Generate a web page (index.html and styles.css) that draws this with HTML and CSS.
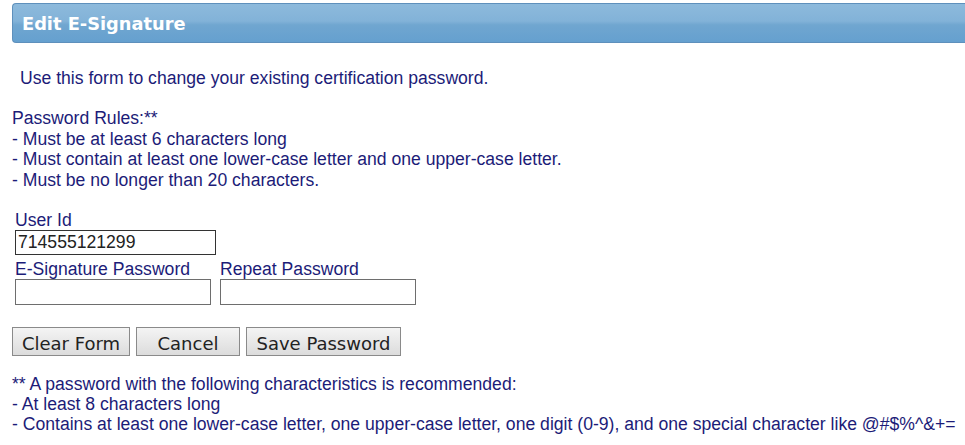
FILE: index.html
```html
<!DOCTYPE html>
<html>
<head>
<meta charset="utf-8">
<link rel="stylesheet" href="styles.css">
</head>
<body>
<div class="header"><span class="title">Edit E-Signature</span></div>
<p class="intro">Use this form to change your existing certification password.</p>
<div class="rules">
  <div>Password Rules:**</div>
  <div>- Must be at least 6 characters long</div>
  <div>- Must contain at least one lower-case letter and one upper-case letter.</div>
  <div>- Must be no longer than 20 characters.</div>
</div>
<form class="form">
  <div class="field">
    <label class="label">User Id</label>
    <input class="input input-user" type="text" value="714555121299">
  </div>
  <div class="row">
    <div class="field">
      <label class="label">E-Signature Password</label>
      <input class="input input-pw" type="password">
    </div>
    <div class="field">
      <label class="label">Repeat Password</label>
      <input class="input input-pw" type="password">
    </div>
  </div>
  <div class="buttons">
    <button type="button" class="btn btn-clear">Clear Form</button>
    <button type="button" class="btn btn-cancel">Cancel</button>
    <button type="button" class="btn btn-save">Save Password</button>
  </div>
</form>
<div class="notes">
  <div>** A password with the following characteristics is recommended:</div>
  <div>- At least 8 characters long</div>
  <div>- Contains at least one lower-case letter, one upper-case letter, one digit (0-9), and one special character like @#$%^&amp;+=</div>
</div>
</body>
</html>
```
FILE: styles.css
```css
html, body {
  margin: 0;
  padding: 0;
  background: #ffffff;
}
body {
  font-family: "Liberation Sans", Arial, sans-serif;
  font-size: 17.6px;
  color: #1c1c78;
  overflow: hidden;
}
.header {
  margin: 3px 0 0 12px;
  height: 38px;
  border: 1px solid #5e90bc;
  border-right: none;
  border-radius: 4px 0 0 4px;
  background: linear-gradient(to bottom, #8dbadc 0%, #82b2d8 45%, #70a6d0 55%, #65a0cf 100%);
  display: flex;
  align-items: center;
  padding-left: 9px;
}
.title {
  font-family: "DejaVu Sans", Verdana, sans-serif;
  font-weight: bold;
  font-size: 17.8px;
  color: #ffffff;
}
.intro {
  margin: 25px 0 0 20px;
  line-height: 20px;
}
.rules {
  margin: 20px 0 0 12px;
  line-height: 20.5px;
}
.form {
  margin: 20px 0 0 15px;
}
.field {
  display: flex;
  flex-direction: column;
  align-items: flex-start;
}
.label {
  line-height: 20px;
}
.row {
  display: flex;
  gap: 9px;
  margin-top: 4px;
}
.input {
  box-sizing: border-box;
  margin: 0;
  height: 26px;
  border: 1px solid #6e6e6e;
  font-family: "Liberation Sans", Arial, sans-serif;
  font-size: 17.6px;
  color: #222222;
  padding: 0 2px;
  background: #fff;
}
.input-user {
  width: 201px;
  height: 25px;
  border-color: #333;
}
.input-pw {
  width: 196px;
}
.buttons {
  display: flex;
  gap: 6px;
  margin: 22px 0 0 -3px;
}
.btn {
  box-sizing: border-box;
  height: 29px;
  border: 1px solid #8a8a8a;
  background: linear-gradient(to bottom, #f4f4f4 0%, #e8e8e8 50%, #dcdcdc 100%);
  font-family: "DejaVu Sans", Verdana, sans-serif;
  font-size: 18px;
  color: #222222;
  padding: 3px 6px 0;
  border-radius: 0;
}
.btn-clear { width: 118px; }
.btn-cancel { width: 104px; }
.btn-save { width: 155px; }
.notes {
  margin: 18px 0 0 12px;
  line-height: 20px;
  white-space: nowrap;
}
```
